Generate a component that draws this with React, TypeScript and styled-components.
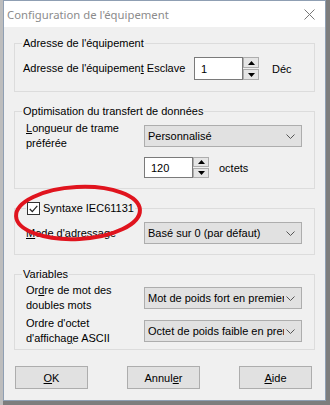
import React from 'react';
import styled, { createGlobalStyle } from 'styled-components';

const GlobalStyle = createGlobalStyle`
  html, body {
    margin: 0;
    padding: 0;
    background: #7d7d7d;
  }
  body {
    font-family: "Liberation Sans", Arial, sans-serif;
    font-size: 11px;
    color: #000;
  }
`;

const Page = styled.div`
  width: 330px;
  height: 405px;
  overflow: hidden;
  background: linear-gradient(to right, #bdbdbd 0, #bdbdbd 3px, #7d7d7d 3px);
`;

const Dialog = styled.div`
  position: relative;
  margin-left: 3px;
  width: 323px;
  height: 401px;
  box-sizing: border-box;
  border: 1px solid #8f9fb3;
  display: flex;
  flex-direction: column;
`;

const TitleBar = styled.div`
  height: 26px;
  flex: none;
  background: #fff;
  display: flex;
  align-items: center;
  justify-content: space-between;
  padding: 0 10px 0 3px;
  font-family: "Noto Sans", "Liberation Sans", sans-serif;
  font-size: 11.3px;
  color: #8c8c8c;
`;

const Body = styled.div`
  flex: 1;
  background: #f0f0f0;
  padding: 16px 10px 0 10px;
  display: flex;
  flex-direction: column;
`;

const GroupBox = styled.div<{ $h: number; $first?: boolean }>`
  position: relative;
  height: ${p => p.$h}px;
  box-sizing: border-box;
  border: 1px solid #dcdcdc;
  margin-top: ${p => (p.$first ? 0 : 19)}px;
  flex: none;
`;

const Caption = styled.div<{ $left: number; $top: number }>`
  position: absolute;
  top: ${p => p.$top}px;
  left: ${p => p.$left}px;
  padding: 0 1px;
  background: #f0f0f0;
  line-height: 13px;
  display: flex;
  align-items: center;
  white-space: nowrap;
`;

const Check = styled.span`
  width: 13px;
  height: 13px;
  box-sizing: border-box;
  border: 1px solid #333;
  background: #fff;
  display: flex;
  align-items: center;
  justify-content: center;
  margin-right: 3px;
`;

const InlineRow = styled.div<{ $top: number; $left: number }>`
  display: flex;
  align-items: center;
  padding: ${p => p.$top}px 0 0 ${p => p.$left}px;
`;

const FormGrid = styled.div<{ $top: number; $gap: number }>`
  display: grid;
  grid-template-columns: 118px 158px;
  row-gap: ${p => p.$gap}px;
  align-items: center;
  padding: ${p => p.$top}px 0 0 11px;
`;

const Label = styled.div<{ $w?: number }>`
  line-height: 15px;
  ${p => (p.$w ? `width: ${p.$w}px;` : '')}
`;

const Spin = styled.div<{ $h: number }>`
  display: flex;
  height: ${p => p.$h}px;
`;

const SpinInput = styled.div`
  width: 49px;
  box-sizing: border-box;
  border: 1px solid #7a7a7a;
  background: #fff;
  display: flex;
  align-items: center;
  padding-left: 6px;
`;

const SpinButtons = styled.div`
  width: 16px;
  display: flex;
  flex-direction: column;
  gap: 1px;
`;

const SpinButton = styled.div`
  flex: 1;
  box-sizing: border-box;
  border: 1px solid #adadad;
  background: #e5e5e5;
  display: flex;
  align-items: center;
  justify-content: center;
`;

const Unit = styled.span<{ $gap: number }>`
  margin-left: ${p => p.$gap}px;
`;

const Combo = styled.div`
  height: 22px;
  box-sizing: border-box;
  border: 1px solid #adadad;
  background: #e1e1e1;
  display: flex;
  align-items: center;
  padding: 0 6px 0 3px;
`;

const ComboText = styled.span`
  flex: 1;
  overflow: hidden;
  white-space: nowrap;
  margin-right: 2px;
`;

const ButtonRow = styled.div`
  display: flex;
  gap: 39px;
  margin: 16px 0 0 1px;
`;

const Button = styled.div`
  width: 73px;
  height: 23px;
  box-sizing: border-box;
  border: 1px solid #adadad;
  background: #e1e1e1;
  display: flex;
  align-items: center;
  justify-content: center;
`;

const U = styled.span`
  text-decoration: underline;
  text-underline-offset: 1px;
`;

const RedMark = styled.svg`
  position: absolute;
  left: 6px;
  top: 179px;
  pointer-events: none;
`;

function Arrow({ up }: { up?: boolean }) {
  return (
    <svg width="7" height="4" viewBox="0 0 7 4">
      <polygon points={up ? '0,4 7,4 3.5,0' : '0,0 7,0 3.5,4'} fill="#000" />
    </svg>
  );
}

function Chevron() {
  return (
    <svg width="9" height="5" viewBox="0 0 9 5">
      <polyline points="0.5,0.5 4.5,4.5 8.5,0.5" fill="none" stroke="#555" strokeWidth="1" />
    </svg>
  );
}

function SpinBox({ value, h }: { value: string; h: number }) {
  return (
    <Spin $h={h}>
      <SpinInput>{value}</SpinInput>
      <SpinButtons>
        <SpinButton><Arrow up /></SpinButton>
        <SpinButton><Arrow /></SpinButton>
      </SpinButtons>
    </Spin>
  );
}

function Select({ text }: { text: string }) {
  return (
    <Combo>
      <ComboText>{text}</ComboText>
      <Chevron />
    </Combo>
  );
}

export default function App() {
  return (
    <Page>
      <GlobalStyle />
      <Dialog>
        <TitleBar>
          <span>Configuration de l'équipement</span>
          <svg width="11" height="11" viewBox="0 0 11 11">
            <path d="M0.5 0.5 L10.5 10.5 M10.5 0.5 L0.5 10.5" stroke="#777" strokeWidth="1" />
          </svg>
        </TitleBar>
        <Body>
          <GroupBox $h={49} $first>
            <Caption $left={7} $top={-7}>Adresse de l'équipement</Caption>
            <InlineRow $top={13} $left={8}>
              <Label $w={171}>Adresse de l'équipemen<U>t</U> Esclave</Label>
              <SpinBox value="1" h={23} />
              <Unit $gap={13}>Déc</Unit>
            </InlineRow>
          </GroupBox>

          <GroupBox $h={78}>
            <Caption $left={7} $top={-7}>Optimisation du transfert de données</Caption>
            <FormGrid $top={9} $gap={6}>
              <Label><U>L</U>ongueur de trame<br />préférée</Label>
              <Select text="Personnalisé" />
              <span />
              <InlineRow $top={0} $left={0}>
                <SpinBox value="120" h={21} />
                <Unit $gap={10}>octets</Unit>
              </InlineRow>
            </FormGrid>
          </GroupBox>

          <GroupBox $h={47}>
            <Caption $left={11} $top={-7}>
              <Check>
                <svg width="9" height="8" viewBox="0 0 9 8">
                  <polyline points="0.8,4 3.3,6.6 8.3,0.8" fill="none" stroke="#222" strokeWidth="1.2" />
                </svg>
              </Check>
              Syntaxe IEC61131
            </Caption>
            <FormGrid $top={13} $gap={0}>
              <Label><U>M</U>ode d'adressage</Label>
              <Select text="Basé sur 0 (par défaut)" />
            </FormGrid>
          </GroupBox>

          <GroupBox $h={76}>
            <Caption $left={7} $top={-7}>Variables</Caption>
            <FormGrid $top={8} $gap={3}>
              <Label>Or<U>d</U>re de mot des<br />doubles mots</Label>
              <Select text="Mot de poids fort en premier" />
              <Label>Ordre d'octet<br />d'afficha<U>g</U>e ASCII</Label>
              <Select text="Octet de poids faible en premier" />
            </FormGrid>
          </GroupBox>

          <ButtonRow>
            <Button><U>O</U>K</Button>
            <Button>Annul<U>e</U>r</Button>
            <Button><U>A</U>ide</Button>
          </ButtonRow>
        </Body>
        <RedMark width="140" height="66" viewBox="0 0 140 66">
          <ellipse cx="68" cy="33" rx="62" ry="26" fill="none" stroke="#e0141e" strokeWidth="4"
            transform="rotate(-3 68 33)" />
        </RedMark>
      </Dialog>
    </Page>
  );
}
